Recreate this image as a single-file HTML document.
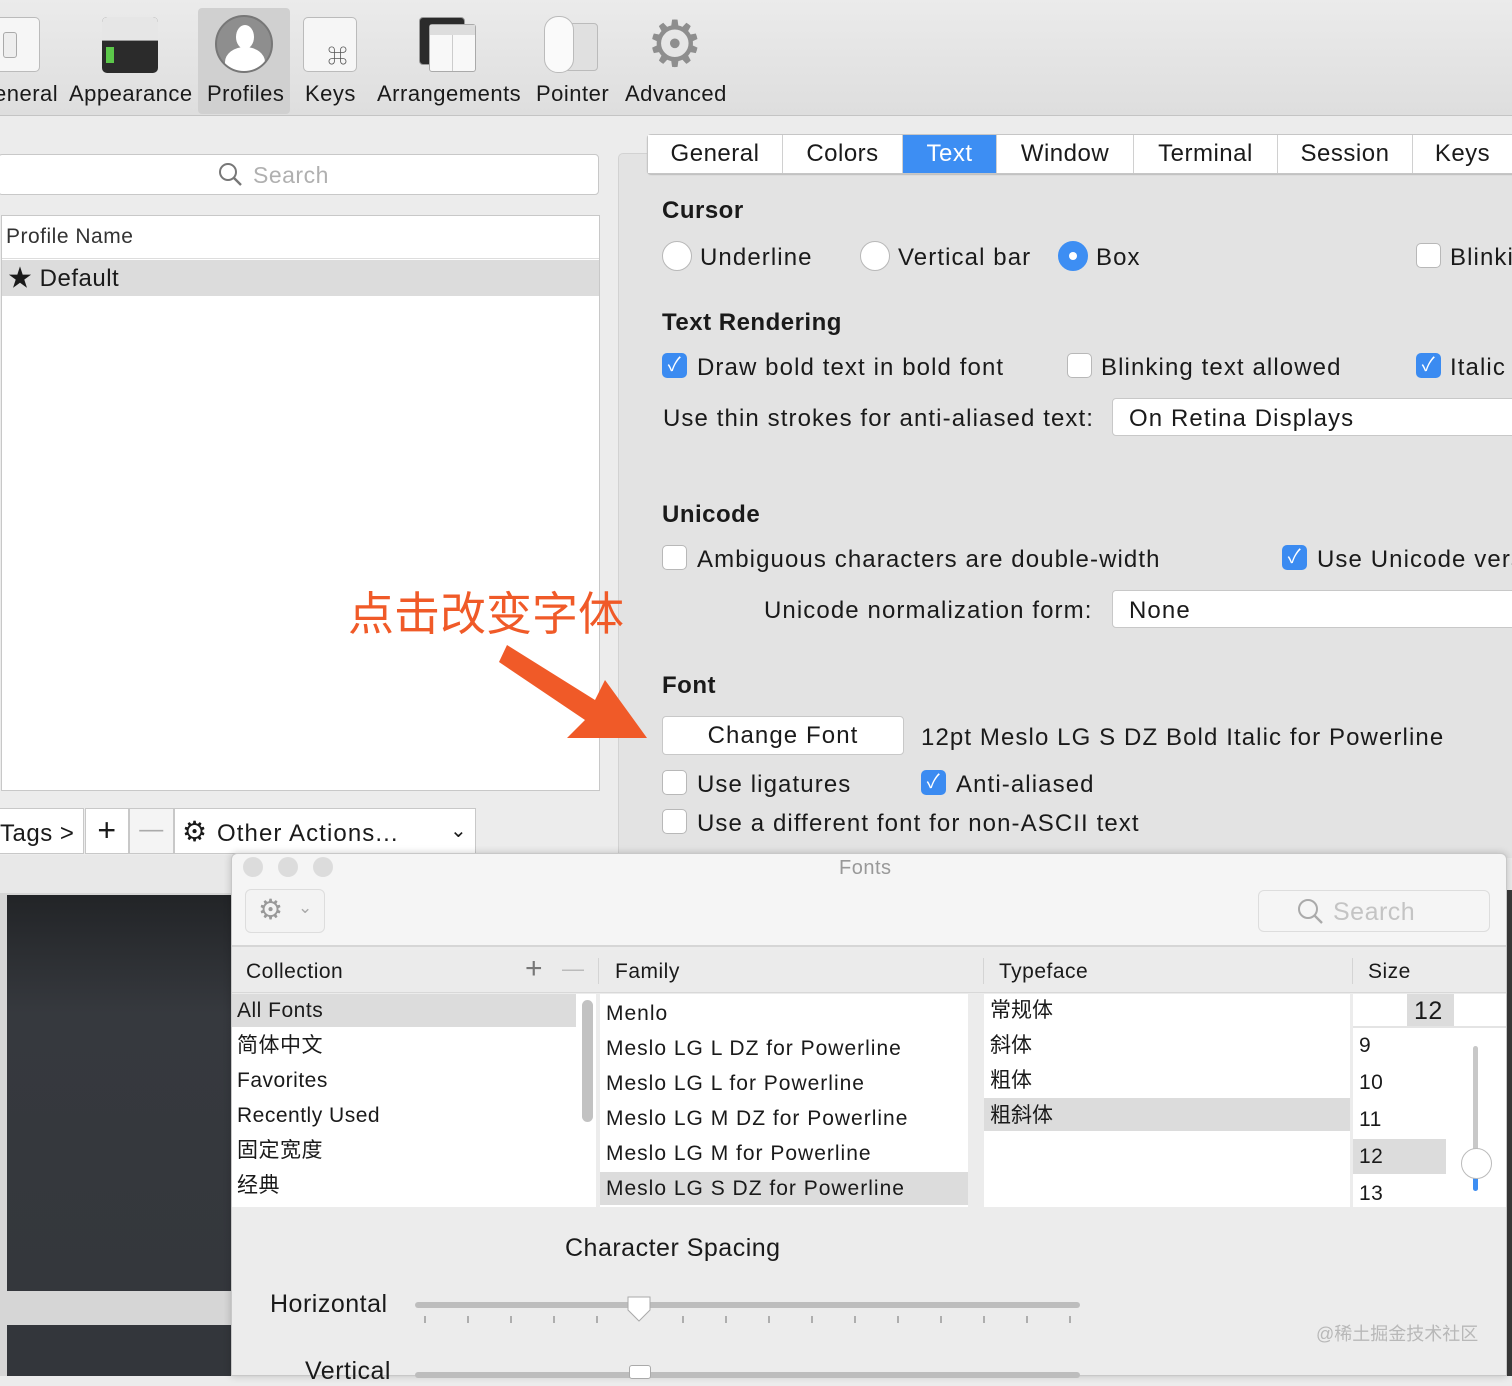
<!DOCTYPE html>
<html><head><meta charset="utf-8"><style>
*{margin:0;padding:0;box-sizing:border-box}
body{width:1512px;height:1376px;overflow:hidden;background:#ececec;font-family:"Liberation Sans","Noto Sans CJK SC",sans-serif;color:#1a1a1a;position:relative;font-size:23px;letter-spacing:0.5px}
.a{position:absolute;white-space:nowrap}
.r{letter-spacing:1.1px}
.cb{position:absolute;width:25px;height:25px;border:1px solid #b8b8b8;border-radius:5px;background:#fff}
.cb.on{background:#3b8bf1;border-color:#3b8bf1;color:#fff;font-size:19px;text-align:center;line-height:23px}
.rb{position:absolute;width:30px;height:30px;border:1px solid #b8b8b8;border-radius:50%;background:#fff}
.b{font-weight:bold}
.tab{position:absolute;top:135px;height:38px;background:#fff;border-right:1px solid #d0d0d0;text-align:center;line-height:38px;font-size:24px}
.g{color:#b5b5b5}
</style></head><body>
<!-- toolbar -->
<div class="a" style="left:0;top:0;width:1512px;height:116px;background:linear-gradient(#ebebeb,#dedede);border-bottom:1px solid #c4c4c4"></div>
<div class="a" style="left:198px;top:8px;width:92px;height:106px;background:#d0d0d0;border-radius:4px"></div>
<div class="a" style="left:-10px;top:17px;width:50px;height:55px;background:#f6f6f6;border:1px solid #bbb;border-radius:5px"></div>
<div class="a" style="left:3px;top:32px;width:14px;height:26px;border:1px solid #aaa;border-radius:3px;background:#eee"></div>
<div class="a" style="left:102px;top:17px;width:56px;height:56px;background:#2b2b2b;border-radius:5px;overflow:hidden"><div style="height:24px;background:#e6e6e6;border-bottom:1px solid #999"></div><div style="position:absolute;left:4px;top:30px;width:8px;height:16px;background:#5cc84a"></div></div>
<div class="a" style="left:215px;top:15px;width:58px;height:58px;border-radius:50%;background:#8e8e8e;border:2px solid #777;overflow:hidden"><div style="position:absolute;left:19px;top:8px;width:18px;height:24px;border-radius:50%;background:#fff"></div><div style="position:absolute;left:8px;top:30px;width:40px;height:30px;border-radius:50% 50% 0 0;background:#fff"></div></div>
<div class="a" style="left:303px;top:17px;width:54px;height:55px;background:#f6f6f6;border:1px solid #bbb;border-radius:5px;font-size:20px;color:#555;text-align:right;padding:22px 8px 0 0">⌘</div>
<div class="a" style="left:419px;top:17px;width:46px;height:48px;background:#2b2b2b;border-radius:4px;border:1px solid #999"></div>
<div class="a" style="left:429px;top:24px;width:47px;height:48px;background:#f8f8f8;border:1px solid #aaa;border-radius:3px"><div style="height:10px;background:#ddd"></div><div style="position:absolute;left:22px;top:10px;width:1px;height:36px;background:#ccc"></div></div>
<div class="a" style="left:560px;top:23px;width:38px;height:48px;background:#e0e0e0;border:1px solid #bbb;border-radius:4px"></div>
<div class="a" style="left:544px;top:16px;width:30px;height:57px;background:#fafafa;border:1px solid #bbb;border-radius:14px"></div>
<div class="a" style="left:645px;top:14px;width:60px;height:60px;font-size:64px;line-height:60px;color:#8e8e8e;text-align:center">⚙</div>
<div class="a" style="left:-6px;top:81px;font-size:22px">eneral</div>
<div class="a" style="left:69px;top:81px;font-size:22px">Appearance</div>
<div class="a" style="left:207px;top:81px;font-size:22px">Profiles</div>
<div class="a" style="left:305px;top:81px;font-size:22px">Keys</div>
<div class="a" style="left:377px;top:81px;font-size:22px">Arrangements</div>
<div class="a" style="left:536px;top:81px;font-size:22px">Pointer</div>
<div class="a" style="left:625px;top:81px;font-size:22px">Advanced</div>

<!-- left -->
<div class="a" style="left:-2px;top:154px;width:601px;height:41px;background:#fff;border:1px solid #c8c8c8;border-radius:4px"></div>
<svg class="a" style="left:218px;top:162px" width="26" height="26"><circle cx="10" cy="10" r="8" fill="none" stroke="#777" stroke-width="2"/><line x1="16" y1="16" x2="23" y2="23" stroke="#777" stroke-width="2.4"/></svg>
<div class="a g" style="left:253px;top:162px;font-size:23px;color:#b0b0b0">Search</div>
<div class="a" style="left:1px;top:215px;width:599px;height:576px;background:#fff;border:1px solid #c8c8c8"></div>
<div class="a" style="left:2px;top:258px;width:597px;height:1px;background:#ddd"></div>
<div class="a" style="left:6px;top:225px;font-size:21px;color:#333">Profile Name</div>
<div class="a" style="left:2px;top:260px;width:597px;height:36px;background:#dcdcdc"></div>
<div class="a" style="left:8px;top:265px;font-size:24px;line-height:28px">★ Default</div>
<div class="a" style="left:-5px;top:808px;width:89px;height:46px;background:#fff;border:1px solid #c8c8c8"></div>
<div class="a" style="left:0;top:820px;font-size:24px">Tags &gt;</div>
<div class="a" style="left:85px;top:808px;width:44px;height:46px;background:#fff;border:1px solid #c8c8c8;text-align:center;font-size:32px;line-height:42px;font-weight:300">+</div>
<div class="a" style="left:129px;top:808px;width:45px;height:46px;background:#f4f4f4;border:1px solid #c8c8c8;text-align:center;font-size:24px;line-height:42px;color:#aaa">—</div>
<div class="a" style="left:174px;top:808px;width:302px;height:46px;background:#fff;border:1px solid #c8c8c8"></div>
<div class="a" style="left:182px;top:815px;font-size:28px">⚙</div>
<div class="a r" style="left:217px;top:820px;font-size:24px">Other Actions...</div>
<div class="a" style="left:450px;top:818px;font-size:20px">⌄</div>

<!-- right panel -->
<div class="a" style="left:618px;top:153px;width:900px;height:705px;background:#e3e3e3;border-top:1px solid #d2d2d2;border-left:1px solid #d2d2d2;border-radius:5px"></div>
<div class="a" style="left:647px;top:134px;width:870px;height:40px;background:#fff;border:1px solid #c6c6c6;border-radius:4px;box-shadow:0 1px 1px #bbb"></div>
<div class="tab" style="left:648px;width:135px">General</div>
<div class="tab" style="left:783px;width:120px">Colors</div>
<div class="tab" style="left:903px;width:94px;background:#3d8ef3;color:#fff">Text</div>
<div class="tab" style="left:997px;width:137px">Window</div>
<div class="tab" style="left:1134px;width:144px">Terminal</div>
<div class="tab" style="left:1278px;width:135px">Session</div>
<div class="tab" style="left:1413px;width:99px;border-right:0">Keys</div>

<div class="a b" style="left:662px;top:197px;font-size:24px">Cursor</div>
<div class="rb" style="left:662px;top:241px"></div><div class="a r" style="left:700px;top:244px;font-size:24px">Underline</div>
<div class="rb" style="left:860px;top:241px"></div><div class="a r" style="left:898px;top:244px;font-size:24px">Vertical bar</div>
<div class="rb" style="left:1058px;top:241px;background:#3d8ef3;border-color:#3d8ef3"><div style="position:absolute;left:10px;top:10px;width:8px;height:8px;border-radius:50%;background:#fff"></div></div><div class="a r" style="left:1096px;top:244px;font-size:24px">Box</div>
<div class="cb" style="left:1416px;top:243px"></div><div class="a r" style="left:1450px;top:244px;font-size:24px">Blinki</div>

<div class="a b" style="left:662px;top:309px;font-size:24px">Text Rendering</div>
<div class="cb on" style="left:662px;top:353px">✓</div><div class="a r" style="left:697px;top:354px;font-size:24px">Draw bold text in bold font</div>
<div class="cb" style="left:1067px;top:353px"></div><div class="a r" style="left:1101px;top:354px;font-size:24px">Blinking text allowed</div>
<div class="cb on" style="left:1416px;top:353px">✓</div><div class="a r" style="left:1450px;top:354px;font-size:24px">Italic</div>
<div class="a r" style="left:663px;top:405px;font-size:24px">Use thin strokes for anti-aliased text:</div>
<div class="a" style="left:1112px;top:398px;width:420px;height:38px;background:#fff;border:1px solid #c8c8c8;border-radius:4px"></div>
<div class="a r" style="left:1129px;top:405px;font-size:24px">On Retina Displays</div>

<div class="a b" style="left:662px;top:501px;font-size:24px">Unicode</div>
<div class="cb" style="left:662px;top:545px"></div><div class="a r" style="left:697px;top:546px;font-size:24px">Ambiguous characters are double-width</div>
<div class="cb on" style="left:1282px;top:545px">✓</div><div class="a r" style="left:1317px;top:546px;font-size:24px">Use Unicode vers</div>
<div class="a r" style="left:764px;top:597px;font-size:24px">Unicode normalization form:</div>
<div class="a" style="left:1112px;top:590px;width:420px;height:38px;background:#fff;border:1px solid #c8c8c8;border-radius:4px"></div>
<div class="a r" style="left:1129px;top:597px;font-size:24px">None</div>

<div class="a b" style="left:662px;top:672px;font-size:24px">Font</div>
<div class="a r" style="left:662px;top:716px;width:242px;height:39px;background:#fff;border:1px solid #c8c8c8;border-radius:4px;text-align:center;line-height:37px;font-size:24px">Change Font</div>
<div class="a r" style="left:921px;top:724px;font-size:24px">12pt Meslo LG S DZ Bold Italic for Powerline</div>
<div class="cb" style="left:662px;top:770px"></div><div class="a r" style="left:697px;top:771px;font-size:24px">Use ligatures</div>
<div class="cb on" style="left:921px;top:770px">✓</div><div class="a r" style="left:956px;top:771px;font-size:24px">Anti-aliased</div>
<div class="cb" style="left:662px;top:809px"></div><div class="a r" style="left:697px;top:810px;font-size:24px">Use a different font for non-ASCII text</div>

<!-- annotation -->
<div class="a" style="left:348px;top:578px;font-size:46px;letter-spacing:0;color:#f05a28;font-family:'Noto Sans CJK SC',sans-serif">点击改变字体</div>
<svg class="a" style="left:495px;top:640px" width="160" height="105"><polygon points="12,5 100,60 110,40 152,98 72,98 90,80 4,22" fill="#f05a28"/></svg>

<!-- left dark terminal -->
<div class="a" style="left:0;top:855px;width:231px;height:40px;background:#e8e8e8"></div>
<div class="a" style="left:0;top:893px;width:231px;height:483px;background:#d6d6d6"></div>
<div class="a" style="left:7px;top:895px;width:224px;height:396px;background:linear-gradient(#222427,#36393e 30%,#34373c)"></div>
<div class="a" style="left:7px;top:1325px;width:224px;height:51px;background:#33363b"></div>
<div class="a" style="left:1505px;top:890px;width:7px;height:486px;background:#3a3a3a"></div>

<!-- fonts panel -->
<div class="a" style="left:231px;top:853px;width:1276px;height:523px;background:#ececec;border:1px solid #c8c8c8;border-radius:6px 6px 0 0;box-shadow:0 0 8px rgba(0,0,0,.2)"></div>
<div class="a" style="left:232px;top:854px;width:1274px;height:93px;background:#f5f5f5;border-bottom:2px solid #d6d6d6;border-radius:6px 6px 0 0"></div>
<div class="a" style="left:243px;top:857px;width:20px;height:20px;border-radius:50%;background:#dcdcdc"></div>
<div class="a" style="left:278px;top:857px;width:20px;height:20px;border-radius:50%;background:#dcdcdc"></div>
<div class="a" style="left:313px;top:857px;width:20px;height:20px;border-radius:50%;background:#dcdcdc"></div>
<div class="a" style="left:839px;top:857px;font-size:20px;color:#999">Fonts</div>
<div class="a" style="left:245px;top:889px;width:80px;height:44px;border:1px solid #ddd;border-radius:6px;background:#f3f3f3"></div>
<div class="a" style="left:258px;top:893px;font-size:28px;color:#999">⚙</div>
<div class="a" style="left:298px;top:898px;font-size:17px;color:#aaa">⌄</div>
<div class="a" style="left:1258px;top:890px;width:232px;height:42px;border:1px solid #ddd;border-radius:6px;background:#f5f5f5"></div>
<svg class="a" style="left:1297px;top:898px" width="28" height="28"><circle cx="11" cy="11" r="9" fill="none" stroke="#aaa" stroke-width="2"/><line x1="17" y1="17" x2="25" y2="25" stroke="#aaa" stroke-width="2.4"/></svg>
<div class="a" style="left:1333px;top:898px;font-size:25px;color:#c4c4c4">Search</div>

<div class="a" style="left:232px;top:950px;width:1274px;height:43px;background:#ebebeb;border-bottom:1px solid #d8d8d8"></div>
<div class="a" style="left:246px;top:960px;font-size:21px">Collection</div>
<div class="a" style="left:525px;top:952px;font-size:30px;color:#777;font-weight:300">+</div>
<div class="a" style="left:562px;top:956px;font-size:22px;color:#bbb">—</div>
<div class="a" style="left:598px;top:958px;width:1px;height:26px;background:#d4d4d4"></div>
<div class="a" style="left:615px;top:960px;font-size:21px">Family</div>
<div class="a" style="left:983px;top:958px;width:1px;height:26px;background:#d4d4d4"></div>
<div class="a" style="left:999px;top:960px;font-size:21px">Typeface</div>
<div class="a" style="left:1352px;top:958px;width:1px;height:26px;background:#d4d4d4"></div>
<div class="a" style="left:1368px;top:960px;font-size:21px">Size</div>

<div class="a" style="left:232px;top:994px;width:364px;height:213px;background:#fff"></div>
<div class="a" style="left:232px;top:994px;width:344px;height:33px;background:#dcdcdc"></div>
<div class="a" style="left:582px;top:1000px;width:11px;height:122px;background:#c2c2c2;border-radius:6px"></div>
<div class="a" style="left:237px;top:993px;font-size:21px;line-height:35px">All Fonts<br>简体中文<br>Favorites<br>Recently Used<br>固定宽度<br>经典</div>

<div class="a" style="left:600px;top:994px;width:368px;height:213px;background:#fff"></div>
<div class="a" style="left:600px;top:1172px;width:368px;height:33px;background:#dcdcdc"></div>
<div class="a" style="left:606px;top:996px;font-size:21px;line-height:35px;letter-spacing:1px">Menlo<br>Meslo LG L DZ for Powerline<br>Meslo LG L for Powerline<br>Meslo LG M DZ for Powerline<br>Meslo LG M for Powerline<br>Meslo LG S DZ for Powerline</div>

<div class="a" style="left:984px;top:994px;width:366px;height:213px;background:#fff"></div>
<div class="a" style="left:984px;top:1098px;width:366px;height:33px;background:#dcdcdc"></div>
<div class="a" style="left:990px;top:992px;font-size:21px;line-height:35px;letter-spacing:0;font-family:'Noto Sans CJK SC',sans-serif">常规体<br>斜体<br>粗体<br>粗斜体</div>

<div class="a" style="left:1353px;top:994px;width:153px;height:213px;background:#fff"></div>
<div class="a" style="left:1353px;top:1026px;width:153px;height:2px;background:#e4e4e4"></div>
<div class="a" style="left:1407px;top:994px;width:47px;height:32px;background:#dcdcdc"></div>
<div class="a" style="left:1414px;top:997px;font-size:25px">12</div>
<div class="a" style="left:1353px;top:1139px;width:93px;height:35px;background:#dcdcdc"></div>
<div class="a" style="left:1359px;top:1027px;font-size:21px;line-height:37px">9<br>10<br>11<br>12<br>13</div>
<div class="a" style="left:1473px;top:1046px;width:5px;height:145px;background:#c8c8c8;border-radius:3px"></div>
<div class="a" style="left:1473px;top:1165px;width:5px;height:26px;background:#3d8ef3;border-radius:3px"></div>
<div class="a" style="left:1461px;top:1148px;width:31px;height:31px;border-radius:50%;background:#fff;border:1px solid #bbb"></div>

<div class="a" style="left:565px;top:1234px;font-size:25px">Character Spacing</div>
<div class="a" style="left:270px;top:1290px;font-size:25px">Horizontal</div>
<div class="a" style="left:415px;top:1302px;width:665px;height:6px;background:#bdbdbd;border-radius:3px"></div>
<svg class="a" style="left:415px;top:1295px" width="670" height="30"><polygon points="213,2 235,2 235,15 224,26 213,15" fill="#fff" stroke="#aaa"/><g stroke="#999" stroke-width="1.5"><line x1="10" y1="21" x2="10" y2="28"/><line x1="53" y1="21" x2="53" y2="28"/><line x1="96" y1="21" x2="96" y2="28"/><line x1="139" y1="21" x2="139" y2="28"/><line x1="182" y1="21" x2="182" y2="28"/><line x1="268" y1="21" x2="268" y2="28"/><line x1="311" y1="21" x2="311" y2="28"/><line x1="354" y1="21" x2="354" y2="28"/><line x1="397" y1="21" x2="397" y2="28"/><line x1="440" y1="21" x2="440" y2="28"/><line x1="483" y1="21" x2="483" y2="28"/><line x1="526" y1="21" x2="526" y2="28"/><line x1="569" y1="21" x2="569" y2="28"/><line x1="612" y1="21" x2="612" y2="28"/><line x1="655" y1="21" x2="655" y2="28"/></g></svg>
<div class="a" style="left:305px;top:1357px;font-size:25px">Vertical</div>
<div class="a" style="left:415px;top:1372px;width:665px;height:6px;background:#bdbdbd;border-radius:3px"></div>
<div class="a" style="left:629px;top:1365px;width:22px;height:14px;background:#fff;border:1px solid #aaa;border-radius:3px"></div>
<div class="a" style="left:1316px;top:1320px;font-size:18px;letter-spacing:0;color:#b8b8b8">@稀土掘金技术社区</div>
</body></html>
